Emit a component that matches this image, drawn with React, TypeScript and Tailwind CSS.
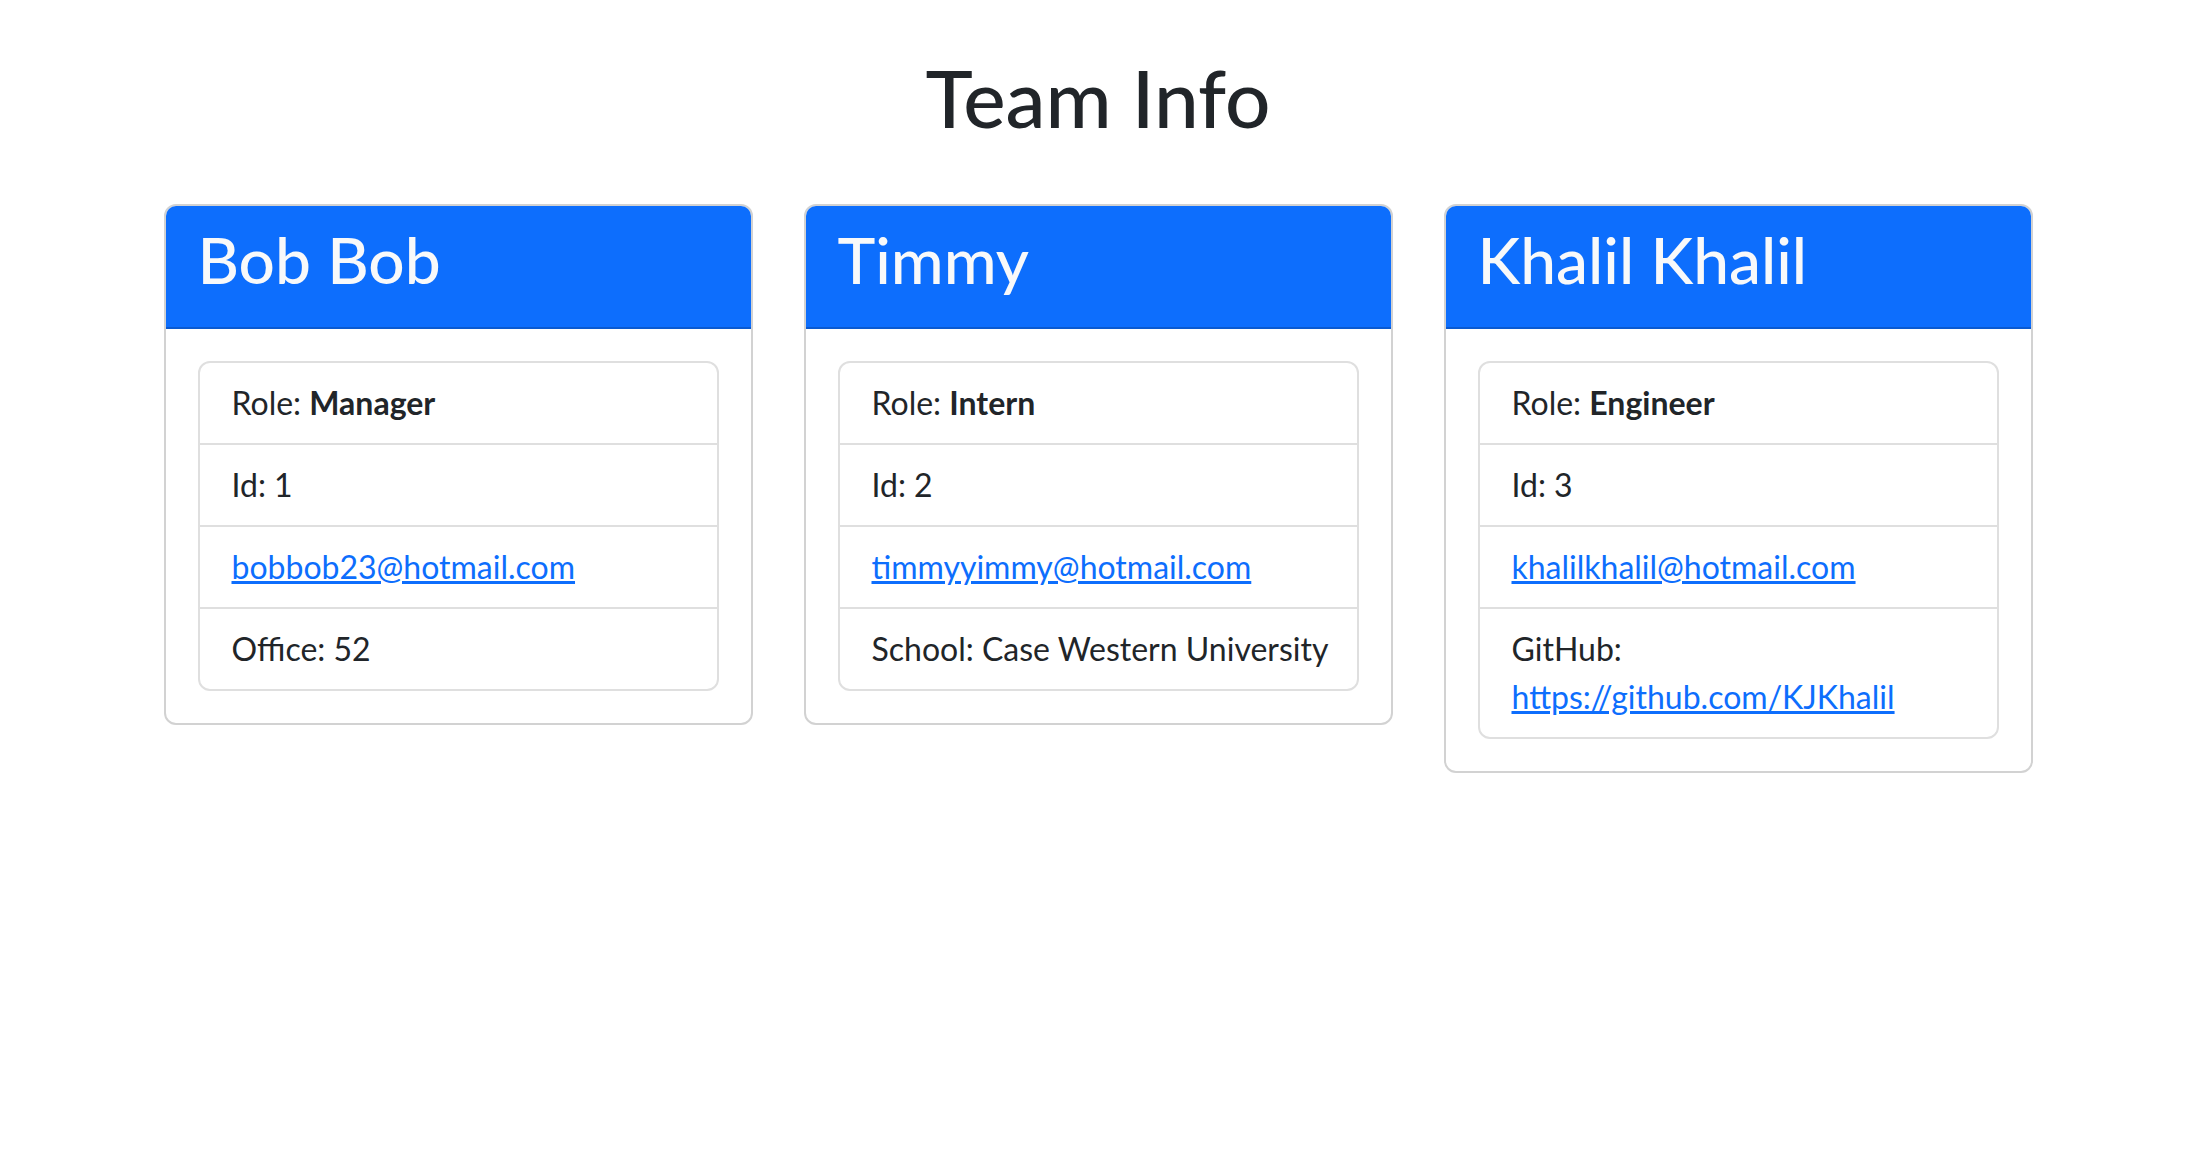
import React from 'react';

type Member = {
  name: string;
  role: string;
  id: number;
  email: string;
  extraLabel: string;
  extraValue: string;
  extraLink?: boolean;
};

const team: Member[] = [
  { name: 'Bob Bob', role: 'Manager', id: 1, email: 'bobbob23@hotmail.com', extraLabel: 'Office', extraValue: '52' },
  { name: 'Timmy', role: 'Intern', id: 2, email: 'timmyyimmy@hotmail.com', extraLabel: 'School', extraValue: 'Case Western University' },
  {
    name: 'Khalil Khalil',
    role: 'Engineer',
    id: 3,
    email: 'khalilkhalil@hotmail.com',
    extraLabel: 'GitHub',
    extraValue: 'https://github.com/KJKhalil',
    extraLink: true,
  },
];

function MemberCard({ member }: { member: Member }) {
  return (
    <div className="flex flex-col bg-white border-2 border-[#d2d2d2] rounded-[12px] overflow-hidden">
      {/* Header */}
      <div className="bg-[#0d6efd] px-8 py-4 border-b-2 border-[rgba(0,0,0,0.175)]">
        <h2 className="text-[64px] leading-[76.8px] font-medium text-[#f8f9fa] mb-3">{member.name}</h2>
      </div>

      {/* Body */}
      <div className="p-8">
        <ul className="border-2 border-[#dfdfdf] rounded-[12px] divide-y-2 divide-[#dfdfdf] text-[32px] leading-[48px] text-[#212529]">
          <li className="px-8 py-4">
            Role: <span className="font-bold">{member.role}</span>
          </li>
          <li className="px-8 py-4">Id: {member.id}</li>
          <li className="px-8 py-4">
            <a href={`mailto:${member.email}`} className="text-[#0d6efd] underline">
              {member.email}
            </a>
          </li>
          {member.extraLink ? (
            <li className="px-8 py-4">
              {member.extraLabel}:{' '}
              <a href={member.extraValue} className="text-[#0d6efd] underline">
                {member.extraValue}
              </a>
            </li>
          ) : (
            <li className="px-8 py-4 whitespace-nowrap">
              {member.extraLabel}: {member.extraValue}
            </li>
          )}
        </ul>
      </div>
    </div>
  );
}

export default function App() {
  return (
    <div className="min-h-screen bg-white font-['Lato',sans-serif] text-[#212529]">
      <h1 className="pt-[49px] text-center text-[80px] leading-[96px] font-medium">Team Info</h1>

      {/* Cards */}
      <div className="w-[1869px] mx-auto mt-[59px] grid grid-cols-3 gap-[51px] items-start">
        {team.map((m) => (
          <MemberCard key={m.id} member={m} />
        ))}
      </div>
    </div>
  );
}
